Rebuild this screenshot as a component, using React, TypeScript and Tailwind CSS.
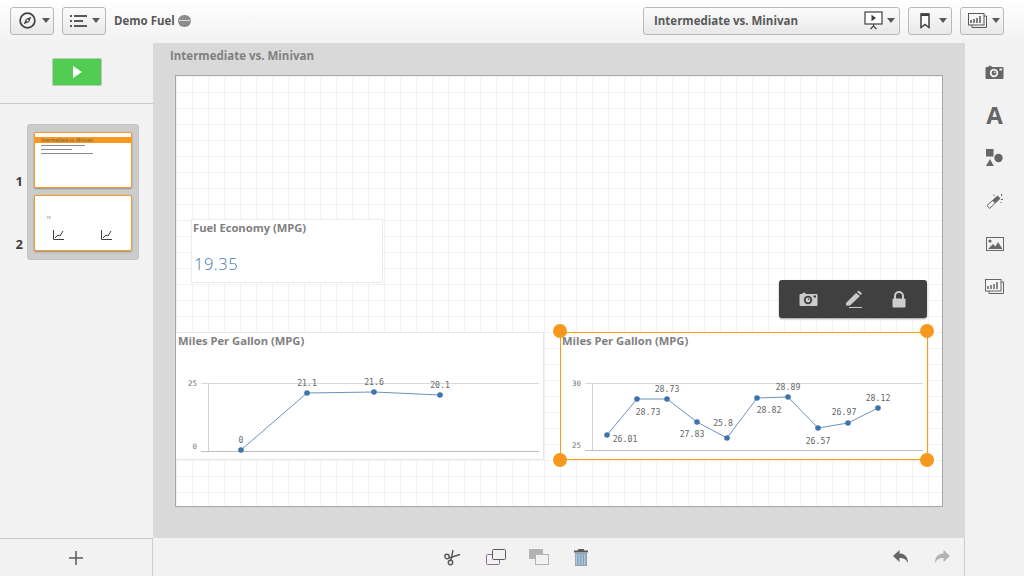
const Caret = () => (
  <svg width="8" height="5" viewBox="0 0 8 5" className="shrink-0">
    <path d="M0 0h8L4 5z" fill="#595959" />
  </svg>
)

const CompassIcon = () => (
  <svg width="17" height="17" viewBox="0 0 18 18">
    <circle cx="9" cy="9" r="7.800" fill="none" stroke="#404040" strokeWidth="1.800" />
    <path d="M13 5 10.700 10.700 5 13 7.300 7.300z" fill="#404040" />
    <circle cx="9" cy="9" r="1.100" fill="#fff" />
  </svg>
)

const ListIcon = () => (
  <svg width="17" height="12" viewBox="0 0 17 12" fill="#595959">
    <rect x="0" y="0" width="2" height="2" />
    <rect x="0" y="5" width="2" height="2" />
    <rect x="0" y="10" width="2" height="2" />
    <rect x="4" y="0" width="13" height="2" />
    <rect x="4" y="5" width="9" height="2" />
    <rect x="4" y="10" width="13" height="2" />
  </svg>
)

const SlideIcon = () => (
  <svg width="19" height="19" viewBox="0 0 19 19">
    <rect x="1" y="1" width="17" height="12" fill="#fff" stroke="#404040" strokeWidth="1.200" />
    <path d="M7.500 3.800 12 7l-4.500 3.200z" fill="#404040" />
    <path d="M9.500 13v2M6.500 18l3-3 3 3" fill="none" stroke="#404040" strokeWidth="1.200" />
  </svg>
)

const BookmarkIcon = () => (
  <svg width="10" height="16" viewBox="0 0 10 16">
    <path d="M1 1h8v13.500L5 11.500 1 14.500z" fill="#fff" stroke="#404040" strokeWidth="1.500" />
    <rect x="1" y="0.500" width="8" height="2.500" fill="#404040" />
  </svg>
)

const ChartsIcon = ({ color = "#595959" }: { color?: string }) => (
  <svg width="19" height="15" viewBox="0 0 19 15" fill="none">
    <path d="M16 3h2.500v11.500H4V12" stroke={color} strokeWidth="1" />
    <rect x="0.500" y="0.500" width="15.500" height="11.500" fill="#f6f6f6" stroke={color} strokeWidth="1" />
    <path d="M3 10V7M6 10V6M9 10V5M12 10V3" stroke={color} strokeWidth="1.500" />
  </svg>
)

const CameraIcon = ({ color = "#666666", hole = "#f2f2f2" }: { color?: string; hole?: string }) => (
  <svg width="19" height="14" viewBox="0 0 18 14">
    <path d="M1 2h2V.8h3V2h11a1 1 0 0 1 1 1v10a1 1 0 0 1-1 1H1a1 1 0 0 1-1-1V3a1 1 0 0 1 1-1z" fill={color} />
    <circle cx="8.500" cy="8" r="4.200" fill={hole} />
    <circle cx="8.500" cy="8" r="2.400" fill={color} />
    <circle cx="9.200" cy="7.300" r="0.800" fill={hole} />
    <rect x="14" y="3.500" width="2.500" height="2" fill={hole} />
  </svg>
)

const ShapesIcon = () => (
  <svg width="17" height="17" viewBox="0 0 17 17" fill="#666666">
    <rect x="0" y="0" width="7.500" height="7.500" />
    <circle cx="12.500" cy="9" r="4.200" />
    <path d="M4 10l3.800 7H0z" />
  </svg>
)

const WandIcon = () => (
  <svg width="18" height="16" viewBox="0 0 18 16">
    <path d="M1 12.500 11.500 3l2.500 2.500L3.500 15.500z" fill="#f2f2f2" stroke="#666666" strokeWidth="1" />
    <path d="M6.500 7.700 11.500 3l2.500 2.500-5 4.800z" fill="#666666" />
    <path d="M8 1.500v1.500M15.500 1v2M17 6.500h-2M14.500 9l1 1" stroke="#666666" strokeWidth="1" />
  </svg>
)

const ImageIcon = () => (
  <svg width="18" height="14" viewBox="0 0 18 14">
    <rect x="0.500" y="0.500" width="17" height="13" fill="none" stroke="#666666" strokeWidth="1" />
    <circle cx="4" cy="4" r="1.600" fill="#666666" />
    <path d="M2 12l5-5 2.500 2.500L12 5l4.500 7z" fill="#666666" />
  </svg>
)

const ScissorsIcon = () => (
  <svg width="17" height="17" viewBox="0 0 17 17" fill="none" stroke="#595959" strokeWidth="1.400">
    <circle cx="3" cy="7.500" r="2.200" />
    <circle cx="6.500" cy="13.500" r="2.200" />
    <path d="M4.800 9 16 5.500M7 11.500 9 1" />
  </svg>
)

const CopyIcon = () => (
  <svg width="20" height="16" viewBox="0 0 20 16" fill="none" strokeWidth="1">
    <rect x="0.500" y="5.500" width="13" height="10" rx="1" stroke="#8c6b96" />
    <rect x="6.500" y="0.500" width="13" height="10" rx="1" fill="#f2f2f2" stroke="#595959" />
  </svg>
)

const PasteIcon = () => (
  <svg width="20" height="16" viewBox="0 0 20 16">
    <rect x="0" y="0" width="14" height="10" fill="#b3b3b3" />
    <rect x="6.500" y="5.500" width="13" height="10" fill="#f2f2f2" stroke="#b3b3b3" />
  </svg>
)

const TrashIcon = () => (
  <svg width="14" height="17" viewBox="0 0 14 17">
    <path d="M4.500 0h5l1 1.500H14V3.500H0V1.500h3.500z" fill="#595959" />
    <rect x="1" y="4" width="12" height="13" fill="#8fa3b5" />
    <path d="M2.500 5v11M5.200 5v11M8 5v11M10.700 5v11" stroke="#a9c8e6" strokeWidth="1.300" />
  </svg>
)

const UndoIcon = ({ color, flip }: { color: string; flip?: boolean }) => (
  <svg width="15" height="14" viewBox="0 0 15 14" className={flip ? "-scale-x-100" : ""}>
    <path d="M6.500 0v3.600C11 3.600 15 6 15 13.500 13.500 9.500 11 8 6.500 8v4L0 6z" fill={color} />
  </svg>
)

const MiniChart = () => (
  <svg width="11" height="10" viewBox="0 0 11 10" fill="none">
    <path d="M.5 0v9.500H11" stroke="#404040" />
    <path d="M2 8l3-3 2 1 3-5" stroke="#404040" />
  </svg>
)

const ToolButton = ({ className, children }: { className: string; children: React.ReactNode }) => (
  <div className={`h-[28px] flex items-center rounded-[3px] border border-[#b9b9b9] bg-linear-to-b from-[#fcfcfc] to-[#e8e8e8] ${className}`}>
    {children}
  </div>
)

const Handle = ({ className }: { className: string }) => (
  <div className={`absolute w-[14px] h-[14px] rounded-full bg-[#f8981d] ${className}`} />
)

const mono = { fontFamily: "'DejaVu Sans Mono', monospace" }

const chart1 = [[241, 450], [307, 393], [374, 392], [440, 395]]
const chart1Labels: [string, number, number][] = [["0", 241, 443], ["21.1", 307, 386], ["21.6", 374, 385], ["20.1", 440, 388]]

const chart2 = [[607, 435], [637, 399], [667, 399], [697, 422], [727, 438], [757, 398], [788, 397], [818, 428], [848, 423], [878, 408]]
const chart2Labels: [string, number, number][] = [
  ["26.01", 625, 442], ["28.73", 648, 415], ["28.73", 667, 392], ["27.83", 692, 437], ["25.8", 723, 426],
  ["28.82", 769, 413], ["28.89", 788, 390], ["26.57", 818, 444], ["26.97", 844, 415], ["28.12", 878, 401],
]

const LineChart = ({ box, points, labels, gridFrom, gridTo, axis, baseY, top, bottom, bottomY }: {
  box: string
  points: number[][]
  labels: [string, number, number][]
  gridFrom: number
  gridTo: number
  axis: number
  baseY: number
  top: string
  bottom: string
  bottomY: number
}) => (
  <svg viewBox={box} className="absolute inset-0 w-full h-full" style={mono}>
    <path d={`M${gridFrom} 383.500H${gridTo}`} stroke="#d9d9d9" />
    <path d={`M${gridFrom} ${baseY}.500H${gridTo}`} stroke="#bfbfbf" />
    <path d={`M${axis}.500 383V${baseY}`} stroke="#d0d0d0" />
    <text x={gridFrom - 4} y="386" textAnchor="end" fontSize="7.500" fill="#737373">{top}</text>
    <text x={gridFrom - 4} y={bottomY} textAnchor="end" fontSize="7.500" fill="#737373">{bottom}</text>
    <polyline points={points.map((p) => p.join(",")).join(" ")} fill="none" stroke="#5b86b3" strokeWidth="0.900" />
    {points.map(([x, y]) => <circle key={x} cx={x} cy={y} r="2.800" fill="#3f74aa" />)}
    {labels.map(([t, x, y]) => <text key={`${t}${x}`} x={x} y={y} textAnchor="middle" fontSize="8.200" fill="#666666">{t}</text>)}
  </svg>
)

export default function App() {
  return (
    <div className="w-[1024px] h-[576px] flex flex-col overflow-hidden bg-[#f2f2f2] font-['Open_Sans',sans-serif]">
      <header className="h-[43px] shrink-0 flex items-center pl-[10px] pr-[20px] pb-[2px] bg-linear-to-b from-white to-[#f2f2f2]">
        <ToolButton className="w-[44px] pl-[8px] gap-[6px]"><CompassIcon /><Caret /></ToolButton>
        <ToolButton className="w-[44px] ml-[8px] pl-[7px] gap-[5px]"><ListIcon /><Caret /></ToolButton>
        <span className="ml-[8px] text-[11.500px] font-bold text-[#595959]">Demo Fuel</span>
        <span className="ml-[3px] w-[13px] h-[12px] rounded-full bg-[#8c8c8c] flex items-center justify-center">
          <span className="w-[11px] h-px bg-[#dddddd]" />
        </span>
        <ToolButton className="w-[257px] ml-auto pl-[10px] pr-[4px]">
          <span className="text-[11.500px] font-bold text-[#595959]">Intermediate vs. Minivan</span>
          <span className="ml-auto mr-[4px]"><SlideIcon /></span>
          <Caret />
        </ToolButton>
        <ToolButton className="w-[44px] ml-[8px] pl-[11px] gap-[9px]"><BookmarkIcon /><Caret /></ToolButton>
        <ToolButton className="w-[44px] ml-[8px] pl-[7px] gap-[5px]"><ChartsIcon /><Caret /></ToolButton>
      </header>

      <div className="flex-1 flex min-h-0">
        <aside className="w-[153px] shrink-0 flex flex-col">
          <div className="h-[61px] shrink-0 flex justify-center pt-[15px] pl-[1px] border-b border-[#cccccc]">
            <div className="w-[50px] h-[28px] rounded-[2px] border border-[#b9c9b9] bg-[#52cc52] flex items-center justify-center">
              <svg width="9" height="12" viewBox="0 0 9 12"><path d="M0 0l9 6L0 12z" fill="#fff" /></svg>
            </div>
          </div>
          <div className="flex-1 flex pt-[20px]">
            <div className="w-[27px] pt-[8px] flex flex-col gap-[7px] items-end pr-[4px]">
              <div className="h-[56px] flex items-end"><span className="text-[13px] leading-[14px] font-bold text-[#404040]">1</span></div>
              <div className="h-[56px] flex items-end"><span className="text-[13px] leading-[14px] font-bold text-[#404040]">2</span></div>
            </div>
            <div className="w-[112px] h-[136px] px-[6px] pt-[7px] flex flex-col gap-[7px] rounded-[3px] bg-[#cccccc] border border-[#c4c4c4]">
              <div className="h-[56px] shrink-0 rounded-[2px] border border-[#f8981d] bg-white pt-[4px] shadow-[0_1px_2px_rgba(0,0,0,0.3)]">
                <div className="h-[6px] bg-[#f8981d] pl-[6px] text-[4.500px] leading-[6px] text-[#595959] whitespace-nowrap overflow-hidden">Intermediate vs. Minivan</div>
                <div className="mt-[2px] ml-[6px] w-[44px] h-px bg-[#8c8c8c]" />
                <div className="mt-[3px] ml-[6px] w-[31px] h-px bg-[#8c8c8c]" />
                <div className="mt-[3px] ml-[6px] w-[52px] h-px bg-[#8c8c8c]" />
              </div>
              <div className="relative h-[56px] shrink-0 rounded-[2px] border border-[#f8981d] bg-white shadow-[0_1px_2px_rgba(0,0,0,0.3)]">
                <span className="absolute left-[11px] top-[19px] text-[4px] leading-[5px] text-[#595959]">19</span>
                <span className="absolute left-[18px] top-[34px]"><MiniChart /></span>
                <span className="absolute left-[66px] top-[34px]"><MiniChart /></span>
              </div>
            </div>
          </div>
          <div className="h-[38px] shrink-0 border-t border-r border-[#cccccc] flex items-center justify-center">
            <svg width="14" height="14" viewBox="0 0 14 14"><path d="M7 0v14M0 7h14" stroke="#595959" strokeWidth="1.500" /></svg>
          </div>
        </aside>

        <main className="flex-1 min-w-0 flex flex-col">
          <div className="flex-1 min-h-0 flex flex-col bg-[#d9d9d9] pl-[22px] pr-[22px] pb-[31px]">
            <div className="h-[32px] shrink-0 -ml-[5px] pt-[5px] text-[11.500px] leading-[16px] font-bold text-[#808080]">Intermediate vs. Minivan</div>
            <section className="relative flex-1 border border-[#a6a6a6] bg-white bg-[linear-gradient(#f3f3f3_1px,transparent_1px),linear-gradient(90deg,#f3f3f3_1px,transparent_1px)] bg-[size:16px_16px]">
              <div className="absolute left-[15px] top-[143px] w-[192px] h-[64px] border border-[#ebebeb] bg-white px-[1px] py-[1px]">
                <div className="text-[11.200px] leading-[14px] font-bold text-[#808080]">Fuel Economy (MPG)</div>
                <div className="mt-[19px] pl-[1px] text-[16.500px] leading-[20px] tracking-[0.5px] text-[#4477aa] font-light">19.35</div>
              </div>

              <div className="absolute left-0 top-[256px] w-[368px] h-[128px] border-y border-r border-[#e6e6e6] bg-white">
                <LineChart box="176 333 367 126" points={chart1} labels={chart1Labels} gridFrom={201} gridTo={539} axis={208} baseY={451} top="25" bottom="0" bottomY={449} />
                <div className="relative pl-[2px] pt-[1px] text-[11.200px] leading-[14px] font-bold text-[#808080]">Miles Per Gallon (MPG)</div>
              </div>

              <div className="absolute left-[603px] top-[204px] w-[148px] h-[38px] rounded-[3px] bg-[#404040] shadow-[0_1px_2px_rgba(0,0,0,0.4)] flex items-center">
                <span className="w-[57px] flex justify-center pl-[1px]"><CameraIcon color="#cccccc" hole="#404040" /></span>
                <span className="w-[35px] flex justify-center">
                  <svg width="18" height="18" viewBox="0 0 18 18">
                    <path d="M1 13 11 3l4 3L5 15.500H1z" fill="#cccccc" />
                    <path d="M12 2l1.500-1.500L17 3.500 15.800 5z" fill="#cccccc" />
                    <path d="M4 17.500h13" stroke="#cccccc" />
                  </svg>
                </span>
                <span className="w-[55px] flex justify-center">
                  <svg width="14" height="17" viewBox="0 0 14 17">
                    <path d="M3 8V5a4 4 0 0 1 8 0v3" fill="none" stroke="#cccccc" strokeWidth="2" />
                    <rect x="0.500" y="7.500" width="13" height="9" rx="1" fill="#cccccc" />
                  </svg>
                </span>
              </div>

              <div className="absolute left-[384px] top-[256px] w-[368px] h-[128px] border border-[#f8981d] bg-white">
                <LineChart box="561 333 366 126" points={chart2} labels={chart2Labels} gridFrom={585} gridTo={923} axis={592} baseY={450} top="30" bottom="25" bottomY={448} />
                <div className="relative pl-[1px] pt-[1px] text-[11.200px] leading-[14px] font-bold text-[#808080]">Miles Per Gallon (MPG)</div>
                <Handle className="-left-[8px] -top-[9px]" />
                <Handle className="-right-[7px] -top-[9px]" />
                <Handle className="-left-[8px] -bottom-[8px]" />
                <Handle className="-right-[7px] -bottom-[8px]" />
              </div>
            </section>
          </div>
          <footer className="h-[38px] shrink-0 flex items-center pl-[278px] pr-[1px] border-r border-[#cccccc]">
            <span className="w-[43px] flex justify-center"><ScissorsIcon /></span>
            <span className="w-[43px] flex justify-center"><CopyIcon /></span>
            <span className="w-[43px] flex justify-center"><PasteIcon /></span>
            <span className="w-[41px] flex justify-center"><TrashIcon /></span>
            <span className="ml-auto w-[43px] flex justify-center"><UndoIcon color="#666666" /></span>
            <span className="w-[41px] flex justify-center"><UndoIcon color="#b3b3b3" flip /></span>
          </footer>
        </main>

        <aside className="w-[59px] shrink-0 flex flex-col items-center pt-[7px]">
          <div className="h-[43px] flex items-center"><CameraIcon /></div>
          <div className="h-[43px] flex items-center text-[24px] font-bold text-[#666666] leading-none">A</div>
          <div className="h-[43px] flex items-center"><ShapesIcon /></div>
          <div className="h-[43px] flex items-center"><WandIcon /></div>
          <div className="h-[43px] flex items-center"><ImageIcon /></div>
          <div className="h-[43px] flex items-center"><ChartsIcon color="#666666" /></div>
        </aside>
      </div>
    </div>
  )
}
